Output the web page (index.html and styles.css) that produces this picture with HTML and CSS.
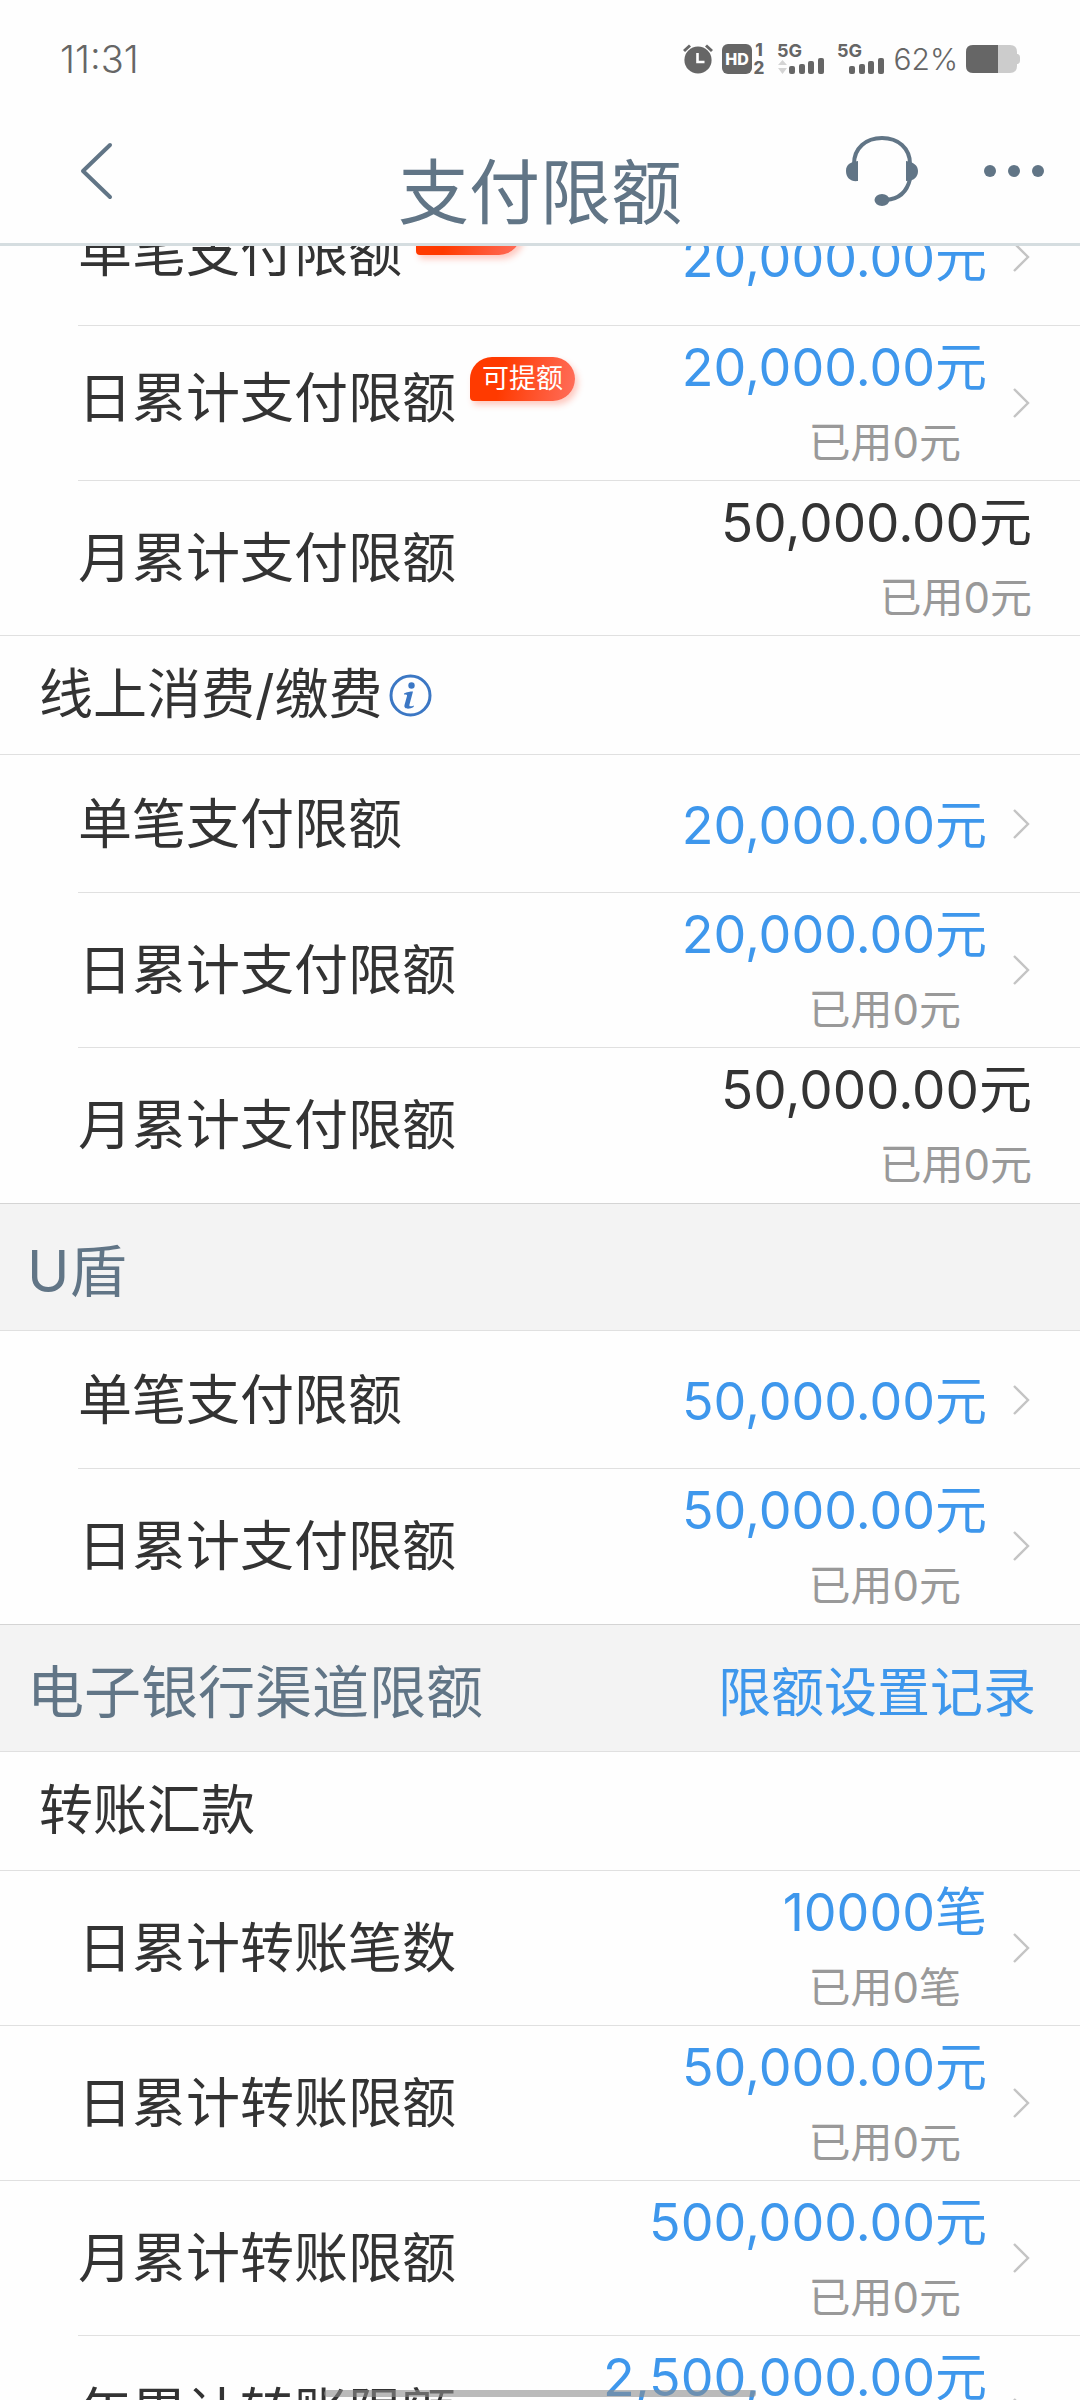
FILE: index.html
```html
<!DOCTYPE html>
<html lang="zh-CN">
<head>
<meta charset="utf-8">
<meta name="viewport" content="width=device-width, initial-scale=1">
<title>支付限额</title>
<link rel="stylesheet" href="styles.css">
</head>
<body>
<svg class="defs" aria-hidden="true">
  <symbol id="chevron" viewBox="0 0 20 32"><path d="M2 2l14 14L2 30" fill="none" stroke="currentColor" stroke-width="2.4"/></symbol>
</svg>
<div class="app">
  <header class="header">
    <div class="status">
      <span class="time">11:31</span>
      <div class="status-icons">
        <svg width="82" height="32" viewBox="0 0 82 32" aria-hidden="true">
          <g fill="#666">
            <circle cx="15" cy="17" r="13.6"/>
            <path d="M0 7l6-5.500 2 2-6 5.500zM30 7l-6-5.500-2 2 6 5.500z"/>
            <rect x="39" y="1" width="30" height="30" rx="6"/>
          </g>
          <path d="M14.500 10v9h7" fill="none" stroke="#fff" stroke-width="2.600"/>
          <text class="hd" x="54" y="22" text-anchor="middle">HD</text>
          <text class="sim" x="76" y="13" text-anchor="middle">1</text>
          <text class="sim" x="76" y="31" text-anchor="middle">2</text>
        </svg>
        <svg class="signal" width="48" height="32" viewBox="0 0 48 32" aria-hidden="true">
          <text class="net" x="0" y="14">5G</text>
          <path d="M1 22l4.500-5 4.500 5zM1 25l4.500 6 4.500-6z" fill="#d4d4d4"/>
          <g fill="#666"><rect x="12" y="23" width="6" height="8" rx="2"/><rect x="22" y="21" width="6" height="10" rx="2"/><rect x="31" y="18" width="6" height="13" rx="2"/><rect x="41" y="15" width="6" height="16" rx="2"/></g>
        </svg>
        <svg class="signal" width="48" height="32" viewBox="0 0 48 32" aria-hidden="true">
          <text class="net" x="0" y="14">5G</text>
          <g fill="#666"><rect x="12" y="23" width="6" height="8" rx="2"/><rect x="22" y="21" width="6" height="10" rx="2"/><rect x="31" y="18" width="6" height="13" rx="2"/><rect x="41" y="15" width="6" height="16" rx="2"/></g>
        </svg>
        <span class="percent">62%</span>
        <svg width="54" height="28" viewBox="0 0 54 28" aria-hidden="true">
          <path d="M7 0H44q7 0 7 7v2h1q2 1 2 3v4q0 2-2 3h-1v2q0 7-7 7H7q-7 0-7-7V7Q0 0 7 0z" fill="#ccc"/>
          <path d="M7 0H32V28H7q-7 0-7-7V7Q0 0 7 0z" fill="#666"/>
        </svg>
      </div>
    </div>
    <nav class="nav">
      <button class="icon-button back" aria-label="返回">
        <svg width="36" height="60" viewBox="0 0 36 60"><path d="M32 4L5 30l27 26" fill="none" stroke="currentColor" stroke-width="4" stroke-linecap="round" stroke-linejoin="round"/></svg>
      </button>
      <h1 class="title">支付限额</h1>
      <div class="actions">
        <button class="icon-button" aria-label="客服">
          <svg width="72" height="70" viewBox="0 0 72 70">
            <path d="M8 28C8 12 20 2 36 2s28 10 28 26" fill="none" stroke="currentColor" stroke-width="4"/>
            <path d="M12 25v20C5 46 0 42 0 35s5-9 12-10zM60 25v20c8 0 12-4 12-10s-5-9-12-10z" fill="currentColor"/>
            <path d="M64 43C61 56 53 63 40 64" fill="none" stroke="currentColor" stroke-width="4"/>
            <ellipse cx="36" cy="64" rx="7.500" ry="6" fill="currentColor"/>
          </svg>
        </button>
        <button class="icon-button" aria-label="更多">
          <svg width="60" height="12" viewBox="0 0 60 12" fill="currentColor"><circle cx="6" cy="6" r="6"/><circle cx="30" cy="6" r="6"/><circle cx="54" cy="6" r="6"/></svg>
        </button>
      </div>
    </nav>
  </header>

  <main class="content">
    <div class="list">
      <a class="row single tagged" href="#">
        <span class="label">单笔支付限额<span class="badge">可提额</span></span>
        <span class="values"><span class="amount">20,000.00元</span></span>
        <svg class="chevron"><use href="#chevron"/></svg>
      </a>
      <a class="row tagged" href="#">
        <span class="label">日累计支付限额<span class="badge">可提额</span></span>
        <span class="values"><span class="amount">20,000.00元</span><span class="used">已用0元</span></span>
        <svg class="chevron"><use href="#chevron"/></svg>
      </a>
      <div class="row fixed full">
        <span class="label">月累计支付限额</span>
        <span class="values"><span class="amount">50,000.00元</span><span class="used">已用0元</span></span>
      </div>

      <h3 class="group">线上消费/缴费
        <button class="icon-button info" aria-label="说明">
          <svg width="43" height="43" viewBox="0 0 43 43"><circle cx="21.500" cy="21.500" r="19.500" fill="none" stroke="#3b77c4" stroke-width="3"/><circle cx="22.500" cy="11.500" r="3.200" fill="#3b77c4"/><path d="M15 19.500c3-1.500 6-2 9-2l-3.500 13c-.5 2 .5 2.500 4.500 1l-.5 1.500c-4 2.500-10 2.500-9-2l2.500-9c.4-1.500-.5-1.500-3-1.500z" fill="#3b77c4"/></svg>
        </button>
      </h3>
      <a class="row single" href="#">
        <span class="label">单笔支付限额</span>
        <span class="values"><span class="amount">20,000.00元</span></span>
        <svg class="chevron"><use href="#chevron"/></svg>
      </a>
      <a class="row" href="#">
        <span class="label">日累计支付限额</span>
        <span class="values"><span class="amount">20,000.00元</span><span class="used">已用0元</span></span>
        <svg class="chevron"><use href="#chevron"/></svg>
      </a>
      <div class="row fixed last">
        <span class="label">月累计支付限额</span>
        <span class="values"><span class="amount">50,000.00元</span><span class="used">已用0元</span></span>
      </div>

      <div class="section"><h2 class="section-title">U盾</h2></div>
      <a class="row single" href="#">
        <span class="label">单笔支付限额</span>
        <span class="values"><span class="amount">50,000.00元</span></span>
        <svg class="chevron"><use href="#chevron"/></svg>
      </a>
      <a class="row last" href="#">
        <span class="label">日累计支付限额</span>
        <span class="values"><span class="amount">50,000.00元</span><span class="used">已用0元</span></span>
        <svg class="chevron"><use href="#chevron"/></svg>
      </a>

      <div class="section"><h2 class="section-title">电子银行渠道限额</h2><a class="record-link" href="#">限额设置记录</a></div>
      <h3 class="group">转账汇款</h3>
      <a class="row full" href="#">
        <span class="label">日累计转账笔数</span>
        <span class="values"><span class="amount">10000笔</span><span class="used">已用0笔</span></span>
        <svg class="chevron"><use href="#chevron"/></svg>
      </a>
      <a class="row full" href="#">
        <span class="label">日累计转账限额</span>
        <span class="values"><span class="amount">50,000.00元</span><span class="used">已用0元</span></span>
        <svg class="chevron"><use href="#chevron"/></svg>
      </a>
      <a class="row" href="#">
        <span class="label">月累计转账限额</span>
        <span class="values"><span class="amount">500,000.00元</span><span class="used">已用0元</span></span>
        <svg class="chevron"><use href="#chevron"/></svg>
      </a>
      <a class="row" href="#">
        <span class="label">年累计转账限额</span>
        <span class="values"><span class="amount">2,500,000.00元</span><span class="used">已用0元</span></span>
        <svg class="chevron"><use href="#chevron"/></svg>
      </a>
    </div>
  </main>
  <div class="home-indicator"></div>
</div>
</body>
</html>
```

FILE: styles.css
```css
* {
  box-sizing: border-box;
}

body {
  margin: 0;
  background: #fefefe;
  color: #333;
  font-family: Inter, "Noto Sans CJK SC", sans-serif;
}

h1, h2, h3 {
  margin: 0;
  font-weight: 400;
}

a {
  color: inherit;
  text-decoration: none;
}

svg {
  display: block;
  flex: none;
  overflow: visible;
}

.defs {
  position: absolute;
  width: 0;
  height: 0;
}

.app {
  position: relative;
  display: flex;
  flex-direction: column;
  height: 100vh;
  overflow: hidden;
}

/* Header */
.header {
  position: relative;
  z-index: 1;
  flex: none;
  background: #fefefe;
  border-bottom: 3px solid #d5dde0;
}

.status {
  display: flex;
  justify-content: space-between;
  align-items: center;
  height: 118px;
  padding: 0 60px;
  color: #666;
}

.time {
  font-size: 38px;
  font-weight: 300;
}

.status-icons {
  display: flex;
  align-items: center;
}

.signal {
  margin-left: 12px;
}

.percent {
  margin: 0 8px;
  font-size: 30px;
  font-weight: 300;
}

.hd {
  fill: #fff;
  font-size: 16px;
  font-weight: 800;
}

.sim {
  fill: #666;
  font-size: 17px;
  font-weight: 800;
}

.net {
  fill: #666;
  font-size: 18px;
  font-weight: 700;
}

.nav {
  display: grid;
  grid-template-columns: 1fr auto 1fr;
  height: 125px;
  padding: 0 36px;
  color: #617586;
}

.icon-button {
  display: flex;
  align-items: center;
  padding: 0;
  border: 0;
  background: none;
  color: inherit;
}

.nav .icon-button {
  height: 105px;
}

.back {
  justify-self: start;
  margin-left: 42px;
}

.title {
  align-self: end;
  font-size: 71px;
  line-height: 102px;
}

.actions {
  display: flex;
  justify-content: flex-end;
  gap: 66px;
}

/* List, scrolled a little under the header */
.content {
  flex: 1;
  min-height: 0;
  overflow: hidden;
}

.list {
  margin-top: -58px;
}

.row {
  position: relative;
  display: flex;
  align-items: center;
  height: 155px;
  padding: 0 48px 1px 78px;
}

.row::after {
  content: "";
  position: absolute;
  inset: auto 0 0 78px;
  height: 1px;
  background: #e0e0e0;
}

.row.single {
  height: 138px;
}

.row.full::after {
  left: 0;
}

.row.last::after {
  display: none;
}

.label {
  flex: 1;
  display: flex;
  align-items: center;
  gap: 14px;
  padding-top: 2px;
  font-size: 54px;
  line-height: 76px;
  white-space: nowrap;
}

.tagged .label {
  padding: 0 0 8px;
}

.badge {
  height: 44px;
  margin-bottom: 40px;
  padding: 0 12px;
  border-radius: 22px 22px 22px 4px;
  background: linear-gradient(100deg, #ff3a00 30%, #ff6e5c);
  box-shadow: 3px 4px 6px rgba(255, 80, 50, 0.3);
  color: #fff;
  font-size: 27px;
  line-height: 44px;
}

.values {
  display: flex;
  flex-direction: column;
  align-items: flex-end;
  white-space: nowrap;
}

.single .values {
  padding-top: 4px;
}

.amount {
  color: #3e97ec;
  font-size: 52px;
  line-height: 80px;
}

.used {
  padding-right: 26px;
  color: #999;
  font-size: 42px;
  line-height: 70px;
}

.fixed .amount {
  color: #333;
  font-size: 53px;
}

.fixed .used {
  padding-right: 0;
}

.chevron {
  width: 20px;
  height: 32px;
  margin-left: 25px;
  color: #c4c4c4;
}

.group {
  display: flex;
  align-items: center;
  gap: 7px;
  height: 119px;
  padding-left: 39px;
  border-bottom: 1px solid #e0e0e0;
  font-size: 54px;
  line-height: 76px;
}

.section {
  display: flex;
  justify-content: space-between;
  align-items: center;
  height: 128px;
  padding: 10px 44px 0 27px;
  border-top: 1px solid #d4d4d4;
  border-bottom: 1px solid #e0e0e0;
  background: #f3f3f3;
}

.section-title {
  color: #617586;
  font-size: 57px;
  line-height: 80px;
}

.record-link {
  color: #3e97ec;
  font-size: 53px;
  line-height: 80px;
}

.home-indicator {
  position: absolute;
  bottom: 3px;
  left: 30%;
  right: 30%;
  height: 7px;
  border-radius: 4px;
  background: rgba(140, 140, 140, 0.6);
}
```
